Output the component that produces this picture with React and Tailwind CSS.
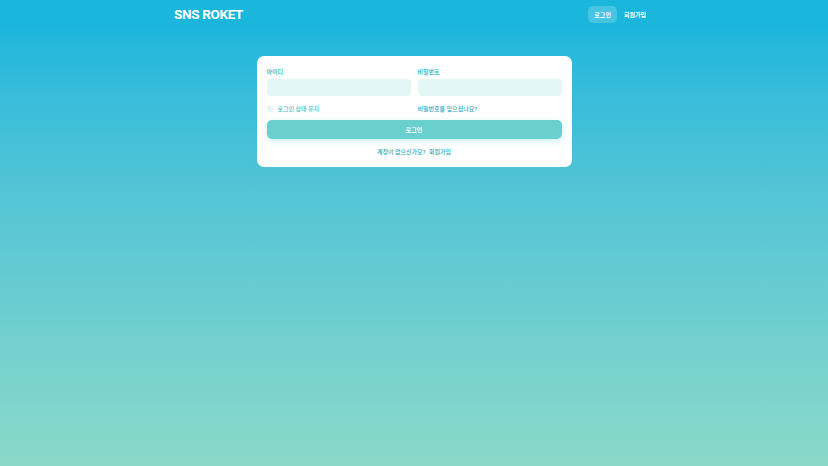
export default function App() {
    return (
        <div className="flex min-h-screen w-full flex-col font-['Roboto','Noto_Sans_CJK_KR',sans-serif]">
            <header className="w-full bg-[#1ab6db]">
                <div className="mx-auto flex h-[29px] w-[480px] items-center justify-between">
                    <h1 className="text-[13.5px] font-bold tracking-tight text-white">SNS ROKET</h1>
                    <nav className="flex items-center gap-[3px] pr-[4px]">
                        <a className="rounded-[5px] bg-white/20 px-[6px] py-[4px] text-[6px] font-bold text-white">로그인</a>
                        <a className="px-[4px] py-[4px] text-[6px] font-bold text-white">회원가입</a>
                    </nav>
                </div>
            </header>

            <main className="flex flex-1 justify-center bg-gradient-to-b from-[#1bb7dc] to-[#8ad9c8] pt-[27px]">
                <section className="h-fit w-[315px] rounded-[7px] bg-white px-[10px] pt-[11px] pb-[11px]">
                    <div className="grid grid-cols-2 gap-[7px]">
                        <div>
                            <p className="mb-[3px] text-[6px] font-bold text-[#3fbfc2]">아이디</p>
                            <div className="h-[17px] rounded-[4px] bg-[#e5f6f6]"></div>
                        </div>
                        <div>
                            <p className="mb-[3px] text-[6px] font-bold text-[#3fbfc2]">비밀번호</p>
                            <div className="h-[17px] rounded-[4px] bg-[#e5f6f6]"></div>
                        </div>
                    </div>

                    <div className="mt-[8px] grid grid-cols-2 gap-[7px]">
                        <label className="flex items-center gap-[5px]">
                            <span className="h-[6px] w-[6px] bg-[#e5f6f6]"></span>
                            <span className="text-[6px] font-medium text-[#3fbfc2]">로그인 상태 유지</span>
                        </label>
                        <a className="text-[6px] font-medium text-[#2aa7b8]">비밀번호를 잊으셨나요?</a>
                    </div>

                    <button className="mt-[7px] flex h-[19px] w-full items-center justify-center rounded-[5px] bg-[#6acfcf] text-[6px] font-bold text-white shadow-[0_2px_6px_rgba(106,207,207,0.35)]">
                        로그인
                    </button>

                    <p className="mt-[8px] text-center text-[6px] font-medium text-[#2aa7b8]">
                        계정이 없으신가요? <a className="ml-[2px]">회원가입</a>
                    </p>
                </section>
            </main>
        </div>
    );
}
